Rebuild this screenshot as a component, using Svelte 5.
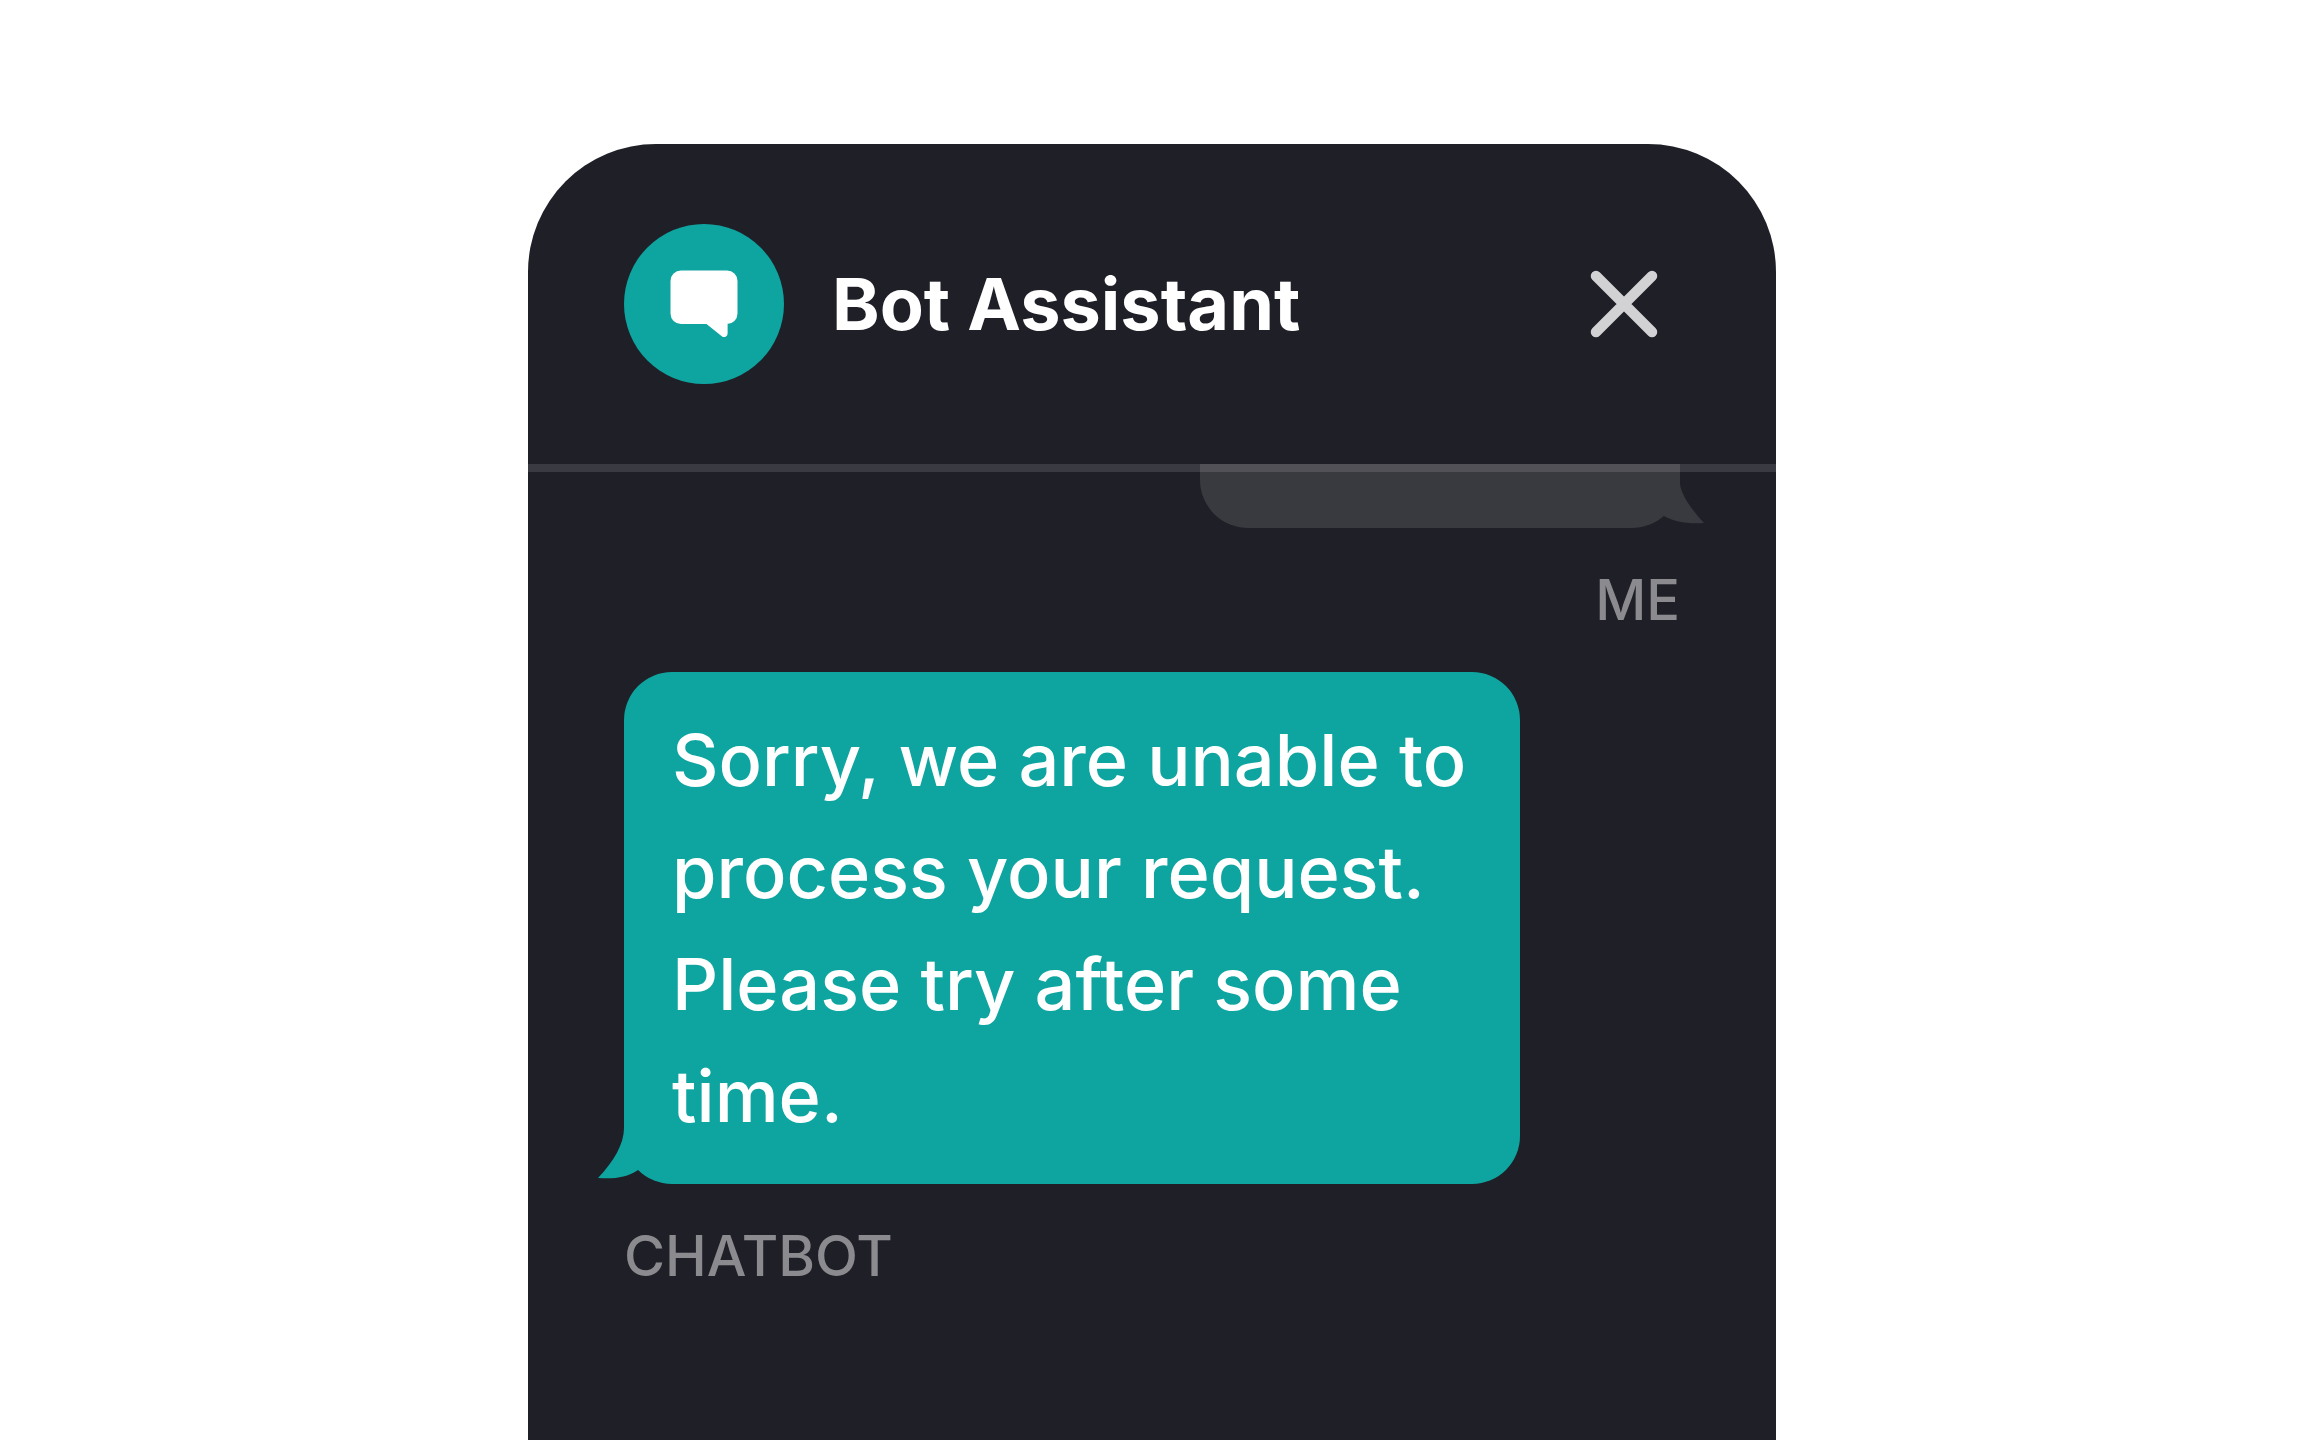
<script>
	let open = $state(true);

	const title = 'Bot Assistant';
	const messages = [
		{ from: 'me', author: 'ME', text: '' },
		{
			from: 'bot',
			author: 'CHATBOT',
			text: 'Sorry, we are unable to process your request. Please try after some time.'
		}
	];

	// both tails are drawn pointing left, the one for "me" is mirrored in css
	const tails = {
		me: 'M26 12C24 25 13 39 2 51C19 52 31 50 42 44L56 30V0H26z',
		bot: 'M26 0C26 16 16 33 0 50C16 51 28 50 40 42L56 30V0z'
	};
</script>

<main>
	{#if open}
		<section class="chat" aria-label={title}>
			<header>
				<div class="avatar">
					<svg viewBox="0 0 160 160" aria-hidden="true">
						<path
							d="M57 46.500h46a10.500 10.500 0 0 1 10.500 10.500v32.500a10.500 10.500 0 0 1-10.500 10.500h.600v9.500a3.500 3.500 0 0 1-5.800 2.700L82.500 100H57a10.500 10.500 0 0 1-10.500-10.500V57a10.500 10.500 0 0 1 10.500-10.500z"
						/>
					</svg>
				</div>
				<h1>{title}</h1>
				<button class="close" aria-label="Close chat" onclick={() => (open = false)}>
					<svg viewBox="0 0 112 112" aria-hidden="true">
						<path d="M28 28l56 56M84 28l-56 56" />
					</svg>
				</button>
			</header>

			<ol class="messages">
				{#each messages as message}
					<li class={message.from}>
						<div class="bubble">
							{#if message.text}<p>{message.text}</p>{/if}
							<svg class="tail" viewBox="0 0 56 56" aria-hidden="true">
								<path d={tails[message.from]} />
							</svg>
						</div>
						<span class="author">{message.author}</span>
					</li>
				{/each}
			</ol>
		</section>
	{/if}
</main>

<style>
	:global(body) {
		margin: 0;
		background: #fff;
	}
	main {
		box-sizing: border-box;
		display: flex;
		justify-content: center;
		min-height: 100vh;
		padding: 144px 32px 0;
		font-family: Inter, 'Liberation Sans', sans-serif;
	}
	.chat {
		width: 100%;
		max-width: 1248px;
		background: #1f1f28;
		border-radius: 128px 128px 0 0;
	}
	header {
		position: relative;
		display: flex;
		align-items: center;
		gap: 48px;
		padding: 80px 96px;
	}
	/* the divider lies over the top of the scrolled messages */
	header::after {
		content: '';
		position: absolute;
		z-index: 1;
		top: 100%;
		left: 0;
		right: 0;
		height: 8px;
		background: rgba(255, 255, 255, 0.12);
	}
	.avatar {
		flex: none;
		width: 160px;
		height: 160px;
		border-radius: 50%;
		background: #0ea5a0;
	}
	.avatar svg {
		display: block;
		fill: #fff;
	}
	h1 {
		flex: 1;
		margin: 0;
		font-size: 72px;
		line-height: 112px;
		font-weight: 700;
		color: #fff;
	}
	.close {
		flex: none;
		width: 112px;
		height: 112px;
		padding: 0;
		border: 0;
		background: none;
		cursor: pointer;
	}
	.close svg {
		display: block;
		fill: none;
		stroke: #d2d2d4;
		stroke-width: 10.5;
		stroke-linecap: round;
	}
	.messages {
		display: flex;
		flex-direction: column;
		gap: 32px;
		margin: 0;
		padding: 0 96px;
		list-style: none;
	}
	li {
		display: flex;
		flex-direction: column;
		align-items: flex-start;
		gap: 32px;
	}
	.bubble {
		position: relative;
		box-sizing: border-box;
		max-width: 896px;
		padding: 32px 48px;
		border-radius: 48px;
		background: #0ea5a0;
		color: #fff;
	}
	.bubble p {
		margin: 0;
		font-size: 72px;
		line-height: 112px;
		font-weight: 500;
	}
	.tail {
		position: absolute;
		left: -26px;
		bottom: 0;
		width: 56px;
		height: 56px;
		fill: #0ea5a0;
	}
	.author {
		font-size: 56px;
		line-height: 80px;
		font-weight: 500;
		color: #8b8b8f;
	}
	.me {
		align-items: flex-end;
	}
	.me .bubble {
		width: 480px;
		border-radius: 0 0 48px 48px;
		background: #393940;
	}
	.me .tail {
		left: auto;
		right: -26px;
		fill: #393940;
		transform: scaleX(-1);
	}
</style>
